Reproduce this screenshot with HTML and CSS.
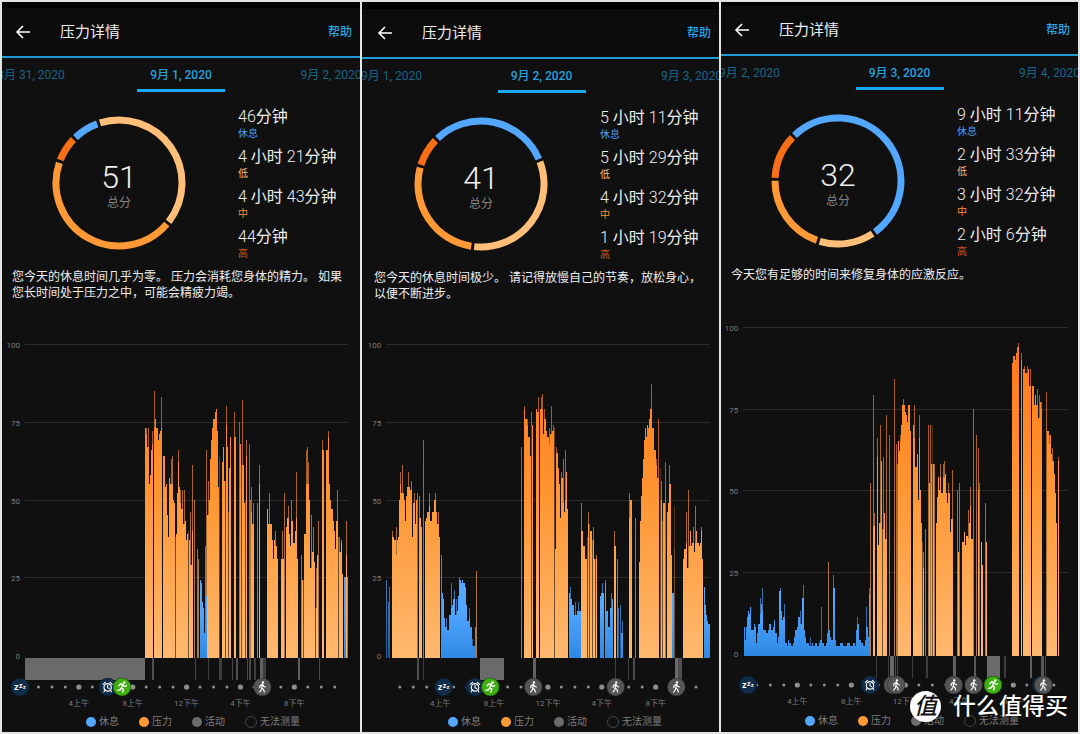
FILE: index.html
```html
<!DOCTYPE html>
<html lang="zh-CN">
<head>
<meta charset="utf-8">
<meta name="viewport" content="width=device-width, initial-scale=1">
<title>压力详情</title>
<link rel="stylesheet" href="styles.css">
</head>
<body>
<svg class="defs" aria-hidden="true">
  <defs>
    <symbol id="walk" viewBox="-9 -9 18 18">
      <circle r="9" fill="#555" stroke="#2a2a2a" stroke-width=".7"/>
      <circle cx=".6" cy="-4.6" r="1.2" fill="#fff"/>
      <path d="M.1-2.8 -.5 .8 1.3 2.6 2 5M-.4 .9-1 2.8-2.6 5M-.2-2.6-2.2-1.4-2.6 .6M.5-2.4 1.3-.8 3 0" fill="none" stroke="#fff" stroke-width="1.2" stroke-linecap="round" stroke-linejoin="round"/>
    </symbol>
    <symbol id="run" viewBox="-9 -9 18 18">
      <circle r="9" fill="#3fae0f" stroke="#1d4a0c" stroke-width=".7"/>
      <circle cx="2.2" cy="-4.5" r="1.3" fill="#fff"/>
      <path d="M.8-2.6-.6 .9 1.4 2.2 .8 5M-.7 .9-1.8 2.8-4.4 3.4M.8-2.7-1.6-3-3.2-1.2M1-2.2 2.4-.6 4.4-1.2" fill="none" stroke="#fff" stroke-width="1.4" stroke-linecap="round" stroke-linejoin="round"/>
    </symbol>
    <symbol id="alarm" viewBox="-9 -9 18 18">
      <circle r="9" fill="#102d49" stroke="#0b1c2c" stroke-width=".7"/>
      <circle cy=".4" r="3.7" fill="none" stroke="#fff" stroke-width="1.2"/>
      <path d="M0-1.7V.6L1.6 1.6M-4.6-2.6-2.4-4.6M4.6-2.6 2.4-4.6M-2.8 3.4-3.8 4.8M2.8 3.4 3.8 4.8" fill="none" stroke="#fff" stroke-width="1.1" stroke-linecap="round"/>
    </symbol>
    <symbol id="sleep" viewBox="-9 -9 18 18">
      <circle r="9" fill="#102d49" stroke="#0b1c2c" stroke-width=".7"/>
      <text class="zzz" x="-6" y="3" font-size="9">z</text>
      <text class="zzz" x="-1" y="1" font-size="7">z</text>
      <text class="zzz" x="3" y="2" font-size="5">z</text>
    </symbol>
  </defs>
</svg>

<main class="board">
  <section class="panel panel-a" data-day="0">
    <header class="bar">
      <button class="back" type="button" aria-label="返回"><svg viewBox="0 0 16 16"><path d="M15 8H2M8 2 2 8l6 6"/></svg></button>
      <h1 class="title">压力详情</h1>
      <a class="help" href="#help">帮助</a>
    </header>
    <nav class="tabs">
      <button class="tab" type="button">8月 31, 2020</button>
      <button class="tab active" type="button">9月 1, 2020</button>
      <button class="tab" type="button">9月 2, 2020</button>
    </nav>
    <div class="summary">
      <div class="score"><svg class="ring" viewBox="-67 -67 134 134"></svg><div class="total"><strong>51</strong><span>总分</span></div></div>
      <dl class="stats">
        <div><dd><span class="num">46</span>分钟</dd><dt class="rest">休息</dt></div>
        <div><dd><span class="num">4</span> 小时 <span class="num">21</span>分钟</dd><dt class="low">低</dt></div>
        <div><dd><span class="num">4</span> 小时 <span class="num">43</span>分钟</dd><dt class="mid">中</dt></div>
        <div><dd><span class="num">44</span>分钟</dd><dt class="high">高</dt></div>
      </dl>
    </div>
    <p class="message">您今天的休息时间几乎为零。 压力会消耗您身体的精力。 如果您长时间处于压力之中，可能会精疲力竭。</p>
    <svg class="chart"></svg>
    <ul class="legend"><li class="k-rest">休息</li><li class="k-stress">压力</li><li class="k-active">活动</li><li class="k-none">无法测量</li></ul>
  </section>

  <section class="panel panel-b" data-day="1">
    <header class="bar">
      <button class="back" type="button" aria-label="返回"><svg viewBox="0 0 16 16"><path d="M15 8H2M8 2 2 8l6 6"/></svg></button>
      <h1 class="title">压力详情</h1>
      <a class="help" href="#help">帮助</a>
    </header>
    <nav class="tabs">
      <button class="tab" type="button">9月 1, 2020</button>
      <button class="tab active" type="button">9月 2, 2020</button>
      <button class="tab" type="button">9月 3, 2020</button>
    </nav>
    <div class="summary">
      <div class="score"><svg class="ring" viewBox="-67 -67 134 134"></svg><div class="total"><strong>41</strong><span>总分</span></div></div>
      <dl class="stats">
        <div><dd><span class="num">5</span> 小时 <span class="num">11</span>分钟</dd><dt class="rest">休息</dt></div>
        <div><dd><span class="num">5</span> 小时 <span class="num">29</span>分钟</dd><dt class="low">低</dt></div>
        <div><dd><span class="num">4</span> 小时 <span class="num">32</span>分钟</dd><dt class="mid">中</dt></div>
        <div><dd><span class="num">1</span> 小时 <span class="num">19</span>分钟</dd><dt class="high">高</dt></div>
      </dl>
    </div>
    <p class="message">您今天的休息时间极少。 请记得放慢自己的节奏，放松身心，以便不断进步。</p>
    <svg class="chart"></svg>
    <ul class="legend"><li class="k-rest">休息</li><li class="k-stress">压力</li><li class="k-active">活动</li><li class="k-none">无法测量</li></ul>
  </section>

  <section class="panel panel-c" data-day="2">
    <header class="bar">
      <button class="back" type="button" aria-label="返回"><svg viewBox="0 0 16 16"><path d="M15 8H2M8 2 2 8l6 6"/></svg></button>
      <h1 class="title">压力详情</h1>
      <a class="help" href="#help">帮助</a>
    </header>
    <nav class="tabs">
      <button class="tab" type="button">9月 2, 2020</button>
      <button class="tab active" type="button">9月 3, 2020</button>
      <button class="tab" type="button">9月 4, 2020</button>
    </nav>
    <div class="summary">
      <div class="score"><svg class="ring" viewBox="-67 -67 134 134"></svg><div class="total"><strong>32</strong><span>总分</span></div></div>
      <dl class="stats">
        <div><dd><span class="num">9</span> 小时 <span class="num">11</span>分钟</dd><dt class="rest">休息</dt></div>
        <div><dd><span class="num">2</span> 小时 <span class="num">33</span>分钟</dd><dt class="low">低</dt></div>
        <div><dd><span class="num">3</span> 小时 <span class="num">32</span>分钟</dd><dt class="mid">中</dt></div>
        <div><dd><span class="num">2</span> 小时 <span class="num">6</span>分钟</dd><dt class="high">高</dt></div>
      </dl>
    </div>
    <p class="message">今天您有足够的时间来修复身体的应激反应。</p>
    <svg class="chart"></svg>
    <ul class="legend"><li class="k-rest">休息</li><li class="k-stress">压力</li><li class="k-active">活动</li><li class="k-none">无法测量</li></ul>
  </section>

  <div class="watermark"><span class="seal">值</span><span>什么值得买</span></div>
</main>
<script src="charts.js"></script>
</body>
</html>
```

FILE: styles.css
```css
* { box-sizing: border-box; }

body {
  margin: 0;
  background: #e4e4e4;
  color: #eee;
  font-family: Roboto, "Noto Sans CJK SC", sans-serif;
}

button { font: inherit; border: 0; background: none; padding: 0; cursor: pointer; }

.defs { position: absolute; width: 0; height: 0; }

.board {
  position: relative;
  display: grid;
  grid-template-columns: 358fr 357fr 357fr;
  gap: 2px;
  padding: 2px;
}

.panel {
  --inset: 0px;
  --strip: 6px;
  min-width: 0;
  min-height: 730px;
  overflow: hidden;
  background: #101010;
  border-top: var(--strip) solid #000;
}
.panel-b { --inset: 2px; --strip: 7px; }
.panel-c { --strip: 4px; }

.bar {
  display: flex;
  align-items: center;
  height: 50px;
  padding: 0 8px 0 calc(13px + var(--inset));
  background: #0c0c0c;
  border-bottom: 2px solid #2199d6;
}
.back { width: 16px; height: 16px; }
.back svg { display: block; width: 16px; height: 16px; fill: none; stroke: #fff; stroke-width: 1.6; }
.title { flex: 1; margin: 0 0 0 29px; font-size: 15px; line-height: 20px; font-weight: 400; }
.help { color: #29a3e2; font-size: 12px; line-height: 20px; font-weight: 500; text-decoration: none; }

.tabs { display: flex; justify-content: center; padding-left: var(--inset); }
.tab {
  display: flex;
  flex: 0 0 150px;
  flex-direction: column;
  align-items: center;
  height: 34px;
  padding-top: 4px;
  color: #1b6488;
  font-size: 12px;
  line-height: 27px;
  white-space: nowrap;
}
.active { color: #27a0de; font-weight: 500; }
.active::after {
  content: "";
  width: 88px;
  height: 3px;
  background: #19aaf0;
}

.summary {
  display: flex;
  gap: 52px;
  height: 177px;
  padding: 15px 0 0 calc(50px + var(--inset));
}
.score { display: grid; width: 134px; height: 134px; margin-top: 9px; }
.ring, .total { grid-area: 1 / 1; }
.ring { width: 134px; height: 134px; }
.ring path { fill: none; stroke-width: 7; }
.total { display: flex; flex-direction: column; align-items: center; padding-top: 45px; }
.total strong { font-size: 32px; line-height: 32px; font-weight: 300; }
.total span { color: #858585; font-size: 12px; line-height: 20px; }

.stats { display: flex; flex-direction: column; gap: 6px; margin: 0; white-space: nowrap; }
.stats dd { margin: 0; font-size: 16px; line-height: 20px; }
.stats dt { font-size: 10px; line-height: 14px; }
.num { font-weight: 300; }
.rest { color: #4a9cf5; }
.low { color: #ffbe76; }
.mid { color: #f78f32; }
.high { color: #d2561d; }

.message {
  margin: 0 0 35px;
  padding: 0 10px 0 calc(10px + var(--inset));
  font-size: 12px;
  line-height: 16px;
}

.chart { display: block; width: 100%; height: auto; }
.chart text { fill: #7c7c7c; font-size: 8px; }
.grid { stroke: #2b2b2b; stroke-width: 1; }
.bars, .grid { shape-rendering: crispEdges; }
.zzz { fill: #fff; font-weight: 700; font-family: Roboto, sans-serif; }

.legend {
  display: flex;
  gap: 20px;
  margin: 0;
  padding: 0 0 0 calc(84px + var(--inset));
  list-style: none;
  color: #7d7d7d;
  font-size: 10px;
  line-height: 20px;
  white-space: nowrap;
}
.legend li { display: flex; align-items: center; gap: 3px; }
.legend li::before { content: ""; width: 10px; height: 10px; border-radius: 50%; background: var(--dot); }
.k-rest { --dot: #53a7ff; }
.k-stress { --dot: #ff9936; }
.k-active { --dot: #6b6b6b; }
.k-none::before { border: 1px solid #444; }

.watermark {
  position: absolute;
  right: 12px;
  bottom: 12px;
  display: flex;
  align-items: center;
  gap: 12px;
  color: #fff;
  font-size: 23px;
  line-height: 31px;
  font-weight: 500;
  text-shadow: 0 0 2px #000;
}
.seal {
  width: 31px;
  height: 31px;
  border-radius: 50%;
  background: #fff;
  color: #111;
  font-style: italic;
  text-align: center;
  text-shadow: none;
}
```

FILE: charts.js
```js
// Horizontal positions are in thirds of a pixel, values are stress levels 0-100.
// stress / rest: "x:level" steps; spikes: single thin readings; slits: [x, width] breaks.
const days = [
  {
    minutes: [46, 261, 283, 44], width: 358, height: 376, top: 8, span: 311, dx: -2,
    hour0: 75, hour: 40.4, gridEnd: 1045,
    stress: "435:73 438:71 441:67 447:55 449:58 453:66 456:68 458:0 462:73 465:76 469:73 473:69 476:71 480:72 484:73 487:0 490:64 494:54 497:49 499:55 502:45 505:38 507:57 510:55 519:50 523:49 526:38 529:39 532:52 535:62 538:54 540:49 544:47 548:51 550:42 554:43 557:37 560:39 564:40 567:37 570:29 576:40 579:0 622:45 626:50 630:63 633:69 637:73 640:76 645:78 648:79 651:72 654:54 658:63 660:0 667:62 670:67 673:56 677:74 680:67 683:46 687:60 690:70 694:0 702:70 708:0 720:68 723:61 732:49 736:50 738:64 741:0 752:46 755:42 762:0 776:55 781:0 800:47 804:42 810:42 815:37 819:31 822:37 826:35 831:31 835:0 842:31 851:36 853:0 859:41 862:44 866:39 869:35 874:43 880:36 884:40 888:44 891:31 894:0 906:24 913:39 917:55 928:50 931:28 936:33 942:30 946:15 951:32 955:0 966:66 973:0 979:66 984:70 987:55 990:50 994:47 998:43 1001:40 1006:34 1009:43 1013:38 1018:33 1024:36 1027:26 1030:0 1038:32 1041:0",
    rest: "599:24 602:23 605:17 608:15 611:7 614:10 617:19 621:0 1033:25 1037:0 1041:25 1043:0",
    spikes: "438:73 444:73 456:72 464:85 484:83 491:64 509:57 514:63 517:64 536:66 542:53 548:53 553:53 572:46 577:61 583:50 591:34 594:31 616:35 620:66 625:56 649:79 657:64 678:80 690:70 703:78 719:75 727:82 739:69 747:68 751:50 755:54 760:49 771:49 777:61 808:52 825:40 847:40 852:52 865:48 875:50 889:59 905:32 920:66 923:67 926:62 934:45 939:41 950:28 955:43 967:69 985:72 1012:53 1018:38 1025:37 1039:43",
    slits: "526:2 564:3 569:2 605:1 657:2 675:2 685:2 724:3 735:2 758:2 866:2 909:4 945:4 1015:2",
    below: "75:359:1 457:5:.7 586:3:.6 623:3:.5 658:8:.5 697:3:.6 708:5:.7 741:4:.6 747:5:.6 763:5:.5 781:7:.9 790:9:.5 895:4:.9 956:3:.6",
    marks: "sleep:60 alarm:323 run:366 walk:787"
  },
  {
    minutes: [311, 329, 272, 79], width: 357, height: 375, top: 7, span: 311, dx: -2,
    hour0: 79, hour: 40.4, gridEnd: 1050,
    stress: "97:38 103:37 108:32 111:37 115:38 117:50 120:55 123:52 130:52 133:50 136:43 139:51 142:54 150:53 155:47 157:38 160:49 165:42 168:50 172:0 177:44 182:41 186:0 194:43 198:44 202:46 206:48 210:43 217:46 222:50 228:46 232:42 236:38 240:0 491:79 496:76 500:74 505:70 510:64 513:74 519:0 528:79 532:78 537:0 541:79 549:71 552:76 557:72 562:70 566:68 570:71 577:72 581:73 584:34 587:65 593:60 598:55 601:44 604:57 608:49 612:46 614:50 617:59 621:47 625:0 663:40 669:35 676:31 680:38 684:42 690:40 695:37 703:31 711:0 763:35 768:0 807:44 811:50 815:0 836:30 839:43 842:51 845:57 848:63 851:69 854:73 858:70 861:74 864:73 868:76 871:79 876:73 882:66 887:61 892:57 898:0 901:50 905:43 910:49 914:0 920:46 923:49 927:55 932:32 935:0 941:34 946:0 970:31 973:34 977:36 981:28 986:35 989:40 992:35 997:36 1002:33 1005:36 1009:40 1012:36 1016:35 1020:36 1023:40 1027:31 1029:0",
    rest: "246:20 249:18 252:12 256:9 262:8 267:13 272:15 276:16 280:18 285:13 291:14 293:19 297:24 303:23 306:24 309:23 314:22 317:16 320:5 322:11 326:12 331:9 335:3 342:3 345:9 347:0 628:20 631:18 636:16 642:13 650:14 662:0 720:19 724:20 731:0 734:23 739:14 744:9 750:15 756:18 760:0 783:7 788:0 937:20 941:0 1032:22 1035:16 1039:13 1042:11 1045:10 1049:0",
    spikes: "96:40 109:41 122:59 128:61 145:59 153:56 162:52 171:52 178:51 189:69 208:52 227:52 234:46 243:32 485:67 494:80 503:76 514:78 535:83 543:83 547:84 553:79 569:73 573:80 581:74 590:67 604:59 610:63 617:66 664:49 686:46 699:41 708:32 762:40 771:31 809:52 825:44 862:74 873:87 890:63 895:76 900:60 903:56 909:49 917:62 928:61 943:48 978:46 985:53 1000:41 1006:48 1023:41 348:27",
    restSpikes: "80:24 84:17 89:22 260:12 273:23 282:21 288:18 299:25 329:15 338:5 630:22 647:17 656:17 727:23 735:24 743:14 754:20 775:15 781:16 787:11",
    slits: "98:2 514:2 583:2 674:2 681:3 688:2 697:3 704:3 900:3 906:3 943:2",
    below: "171:5:.7 190:3:.5 360:72:1 518:10:.9 766:3:.5 803:3:.5 818:7:.7 946:8:1 955:10:.7",
    marks: "sleep:251 alarm:345 run:391 walk:520 walk:767 walk:949"
  },
  {
    minutes: [551, 153, 212, 126], width: 357, height: 393, top: 9, span: 326, dx: -1,
    hour0: 70, hour: 40.5, gridEnd: 1044,
    stress: "459:39 464:0 470:60 474:33 477:40 482:59 485:53 487:38 491:43 496:35 501:0 534:65 537:62 541:65 544:70 547:76 555:74 559:73 562:71 565:76 571:68 574:0 579:70 583:66 586:57 590:55 592:61 594:47 598:66 601:50 604:40 606:34 608:26 612:0 626:52 629:0 632:58 641:0 647:40 650:48 653:54 656:50 660:54 664:49 668:54 676:55 679:49 682:46 685:49 689:37 694:41 699:0 714:31 718:0 727:34 731:37 735:33 738:36 743:35 747:40 750:45 754:35 758:0 774:50 778:0 784:34 786:27 789:0 799:34 801:0 877:89 879:91 884:90 888:92 891:94 896:0 902:90 906:0 910:87 914:86 924:87 928:82 932:0 937:82 941:76 944:79 947:76 954:72 959:77 962:75 966:0 982:68 986:64 989:67 993:61 997:59 1001:55 1004:49 1007:40 1010:0 1013:59 1017:0",
    rest: "71:6 73:8 76:4 79:8 82:11 84:13 87:12 91:14 94:7 99:7 102:9 106:8 109:3 112:6 115:9 119:12 123:15 125:13 128:7 134:7 139:6 144:7 148:9 153:7 158:8 162:10 166:6 170:3 174:5 178:19 183:13 187:10 190:11 196:3 200:2 203:4 208:3 212:2 218:3 221:5 225:7 230:8 235:11 239:9 245:11 247:17 251:7 255:5 259:3 265:3 268:2 275:3 280:2 285:3 290:2 296:3 300:4 306:3 312:2 318:3 320:6 324:7 330:5 334:4 338:3 340:20 344:4 348:2 360:3 370:2 380:3 390:2 398:3 405:2 408:7 411:9 416:6 418:4 424:3 430:2 434:4 437:8 443:5 446:18 451:0",
    spikes: "325:28 451:52 459:79 462:43 473:66 482:70 490:60 499:73 507:67 522:84 528:64 531:58 541:67 550:78 569:76 582:76 597:73 611:31 616:38 625:70 631:70 637:70 643:58 660:58 670:58 674:59 684:52 698:56 712:50 718:52 744:44 751:51 759:75 769:67 775:63 778:52 784:34 796:46 894:95 904:92 912:88 922:88 930:87 939:82 951:81 957:79 963:77 979:80 983:68 989:67 998:63 1014:60",
    restSpikes: "121:17 126:20 180:20 193:15 241:13 249:21 270:5 303:14 341:24 413:11 440:14 447:20",
    slits: "487:3 497:2 607:2 636:2 692:2 901:1 908:2",
    below: "468:3:.5 503:4:.5 509:13:1 524:3:.7 530:4:.6 575:4:.5 619:4:.5 699:9:.9 761:8:.8 800:40:1 853:4:.5 931:5:.9 963:8:.8 974:4:.6",
    marks: "sleep:84 alarm:450 walk:518 walk:529 walk:701 walk:761 run:819 alarm:964 walk:970"
  }
];

const list = (s) => (s ? s.split(" ").map((p) => p.split(":")) : []);
const ringColors = ["#53a7ff", "#ffbf78", "#ff9936", "#f76f17"];

function ring(minutes) {
  const total = minutes.reduce((a, b) => a + b);
  const point = (a) => `${63 * Math.sin(a)} ${-63 * Math.cos(a)}`;
  let angle = -Math.PI / 4;
  return minutes.map((m, i) => {
    const sweep = (m / total) * 2 * Math.PI;
    const from = angle + 0.023, to = angle + sweep - 0.023;
    angle += sweep;
    return `<path stroke="${ringColors[i]}" d="M${point(from)}A63 63 0 ${sweep > Math.PI ? 1 : 0} 1 ${point(to)}"/>`;
  }).join("");
}

function chart(day, id) {
  const zero = day.top + day.span, base = zero + 3;
  const px = (x) => x / 3 + day.dx;
  const py = (v) => zero - (v * day.span) / 100;
  const area = (s) => {
    const steps = list(s);
    return steps.map(([x, v], i) => {
      const next = steps[i + 1];
      return +v && next ? `M${px(x)} ${base}V${py(v)}H${px(next[0])}V${base}Z` : "";
    }).join("");
  };
  const thin = (s, fill) => list(s).map(([x, v]) =>
    `<rect x="${px(x) - 0.5}" y="${py(v)}" width="1" height="${base - py(v)}" fill="${fill}"/>`).join("");

  let out = `<defs>
    <linearGradient id="o${id}" gradientUnits="userSpaceOnUse" x1="0" y1="${py(95)}" x2="0" y2="${base}">
      <stop offset="0" stop-color="#ff7718"/><stop offset=".45" stop-color="#ff9531"/><stop offset="1" stop-color="#ffb970"/></linearGradient>
    <linearGradient id="b${id}" gradientUnits="userSpaceOnUse" x1="0" y1="${py(15)}" x2="0" y2="${base}">
      <stop offset="0" stop-color="#53a7ff"/><stop offset="1" stop-color="#2e89e4"/></linearGradient></defs>`;

  for (const v of [100, 75, 50, 25, 0]) {
    const y = Math.round(py(v)) + 0.5;
    if (v) out += `<line class="grid" x1="${px(day.hour0)}" x2="${px(day.gridEnd)}" y1="${y}" y2="${y}"/>`;
    out += `<text x="${px(day.hour0) - 5}" y="${y + 3}" text-anchor="end">${v}</text>`;
  }

  out += `<g class="bars"><g opacity=".65">${thin(day.spikes, `url(#o${id})`)}${thin(day.restSpikes, `url(#b${id})`)}</g>`;
  out += `<path fill="url(#b${id})" d="${area(day.rest)}"/><path fill="url(#o${id})" d="${area(day.stress)}"/>`;
  out += list(day.slits).map(([x, w]) =>
    `<rect x="${px(x)}" y="${py(74)}" width="${w / 3}" height="${base - py(74)}" fill="#101010" opacity=".6"/>`).join("");
  out += list(day.below).map(([x, w, o]) =>
    `<rect x="${px(x)}" y="${base}" width="${w / 3}" height="22" fill="#6a6a6a" opacity="${o}"/>`).join("") + "</g>";

  const cy = base + 29;
  for (let h = 1; h < 24; h++) {
    out += `<circle cx="${px(day.hour0 + h * day.hour)}" cy="${cy}" r="${h % 4 ? 1.5 : 2.6}" fill="#8f8f8f"/>`;
  }
  ["4上午", "8上午", "12下午", "4下午", "8下午"].forEach((t, i) => {
    out += `<text x="${px(day.hour0 + (i + 1) * 4 * day.hour)}" y="${cy + 19}" text-anchor="middle">${t}</text>`;
  });
  out += list(day.marks).map(([name, x]) =>
    `<use href="#${name}" x="${px(x) - 9}" y="${cy - 9}" width="18" height="18"/>`).join("");
  return out;
}

document.querySelectorAll(".panel").forEach((panel) => {
  const id = panel.dataset.day, day = days[id];
  panel.querySelector(".ring").innerHTML = ring(day.minutes);
  const svg = panel.querySelector(".chart");
  svg.setAttribute("viewBox", `0 0 ${day.width} ${day.height}`);
  svg.innerHTML = chart(day, id);
});
```
